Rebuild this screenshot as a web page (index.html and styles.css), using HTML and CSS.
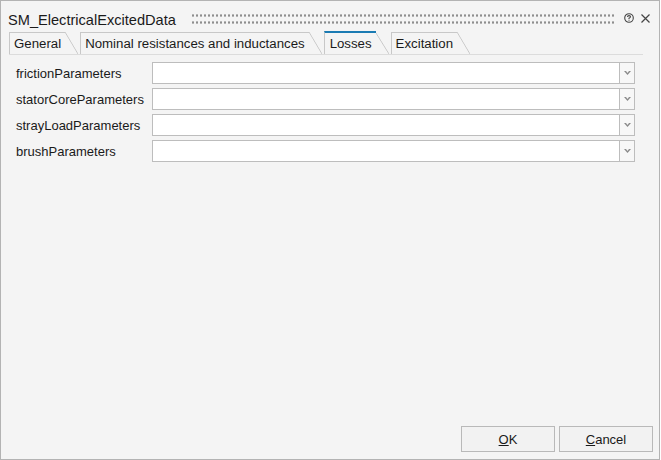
FILE: index.html
```html
<!DOCTYPE html>
<html lang="en">
<head>
  <meta charset="UTF-8">
  <title>SM_ElectricalExcitedData</title>
  <link rel="stylesheet" href="styles.css">
</head>
<body>
  <div class="dialog">
    <div class="titlebar">
      <span class="title">SM_ElectricalExcitedData</span>
      <span class="grip"></span>
      <svg class="help" width="10" height="10" viewBox="0 0 10 10">
        <circle cx="5" cy="5" r="4.3" fill="none" stroke="#444" stroke-width="1.1"/>
        <path d="M3.5 4 Q3.5 2.6 5 2.6 Q6.5 2.6 6.5 3.8 Q6.5 4.6 5 5.2 L5 6" fill="none" stroke="#444" stroke-width="1.1"/>
        <rect x="4.5" y="6.7" width="1" height="1" fill="#444"/>
      </svg>
      <svg class="close" width="9" height="9" viewBox="0 0 9 9">
        <path d="M0.5 0.5 L8.5 8.5 M8.5 0.5 L0.5 8.5" stroke="#444" stroke-width="1.2"/>
      </svg>
    </div>

    <div class="tabs">
      <div class="tab">General</div>
      <div class="tab">Nominal resistances and inductances</div>
      <div class="tab active">Losses</div>
      <div class="tab">Excitation</div>
    </div>

    <div class="form">
      <div class="row">
        <label>frictionParameters</label>
        <div class="combo"><span class="field"></span><span class="drop"><svg width="7" height="5" viewBox="0 0 7 5"><polygon points="0,0 2,0 3.5,2 5,0 7,0 3.5,4" fill="#8a8a8a"/></svg></span></div>
      </div>
      <div class="row">
        <label>statorCoreParameters</label>
        <div class="combo"><span class="field"></span><span class="drop"><svg width="7" height="5" viewBox="0 0 7 5"><polygon points="0,0 2,0 3.5,2 5,0 7,0 3.5,4" fill="#8a8a8a"/></svg></span></div>
      </div>
      <div class="row">
        <label>strayLoadParameters</label>
        <div class="combo"><span class="field"></span><span class="drop"><svg width="7" height="5" viewBox="0 0 7 5"><polygon points="0,0 2,0 3.5,2 5,0 7,0 3.5,4" fill="#8a8a8a"/></svg></span></div>
      </div>
      <div class="row">
        <label>brushParameters</label>
        <div class="combo"><span class="field"></span><span class="drop"><svg width="7" height="5" viewBox="0 0 7 5"><polygon points="0,0 2,0 3.5,2 5,0 7,0 3.5,4" fill="#8a8a8a"/></svg></span></div>
      </div>
    </div>

    <div class="buttons">
      <button class="btn"><u>O</u>K</button>
      <button class="btn"><u>C</u>ancel</button>
    </div>
  </div>
</body>
</html>
```

FILE: styles.css
```css
/* Dialog: SM_ElectricalExcitedData, Losses tab */
:root {
  --bg:          #f4f4f4;
  --frame:       #b3b3b3;
  --tab-border:  #c8c8c8;
  --field-border:#bdbdbd;
  --accent:      #1b7bb3;
  --text:        #1a1a1a;
}

html, body {
  margin: 0;
  padding: 0;
  background: #ffffff;
}

.dialog {
  width: 660px;
  height: 460px;
  box-sizing: border-box;
  border: 1px solid var(--frame);
  background: var(--bg);
  color: var(--text);
  font-family: "Liberation Sans", Arial, sans-serif;
  font-size: 13px;
  display: flex;
  flex-direction: column;
}

/* title bar */
.titlebar {
  display: flex;
  align-items: flex-start;
  height: 30px;
}
.title {
  font-size: 14.6px;
  line-height: 17px;
  margin: 11px 0 0 7px;
  white-space: nowrap;
}
.grip {
  flex: 1;
  height: 14px;
  margin: 11px 0 0 15px;
  background-image: radial-gradient(circle, #8e8e8e 1px, transparent 1.3px);
  background-size: 4px 7px;
}
.help {
  margin: 12px 0 0 10px;
}
.close {
  margin: 13px 9px 0 7px;
}

/* tabs */
.tabs {
  display: flex;
  align-items: flex-end;
  height: 23px;
  margin: 0 16px 0 8px;
  border-bottom: 1px solid #dcdcdc;
}
.tab {
  position: relative;
  height: 21px;
  line-height: 21px;
  padding: 0 4px 0 4px;
  margin-right: 15px;
  border-top: 1px solid var(--tab-border);
  border-left: 1px solid var(--tab-border);
  font-size: 13.25px;
  white-space: nowrap;
}
.tab::after {
  content: "";
  position: absolute;
  left: 100%;
  top: -1px;
  bottom: 0;
  width: 13px;
  background: linear-gradient(to bottom left,
    transparent calc(50% - 0.8px),
    var(--tab-border) 50%,
    transparent calc(50% + 0.8px));
}
.tab.active {
  border-top: 2px solid var(--accent);
  padding-left: 5px;
}
.tab.active::after {
  top: 0;
}

/* form rows */
.form {
  display: flex;
  flex-direction: column;
  gap: 4px;
  padding: 7px 24px 0 15px;
}
.row {
  display: flex;
  align-items: center;
  height: 22px;
}
.row label {
  width: 136px;
  flex: none;
  white-space: nowrap;
}
.combo {
  flex: 1;
  display: flex;
  height: 22px;
  box-sizing: border-box;
  border: 1px solid var(--field-border);
  background: #ffffff;
}
.field {
  flex: 1;
}
.drop {
  width: 14px;
  border-left: 1px solid var(--field-border);
  background: #f7f7f7;
  display: flex;
  align-items: center;
  justify-content: center;
}

/* bottom buttons */
.buttons {
  margin-top: auto;
  display: flex;
  justify-content: flex-end;
  gap: 4px;
  padding: 0 6px 7px 0;
}
.btn {
  width: 94px;
  height: 26px;
  box-sizing: border-box;
  border: 1px solid #b9b9b9;
  background: #f2f2f2;
  font-family: "Liberation Sans", Arial, sans-serif;
  font-size: 13px;
  color: var(--text);
  padding: 0;
}
```
